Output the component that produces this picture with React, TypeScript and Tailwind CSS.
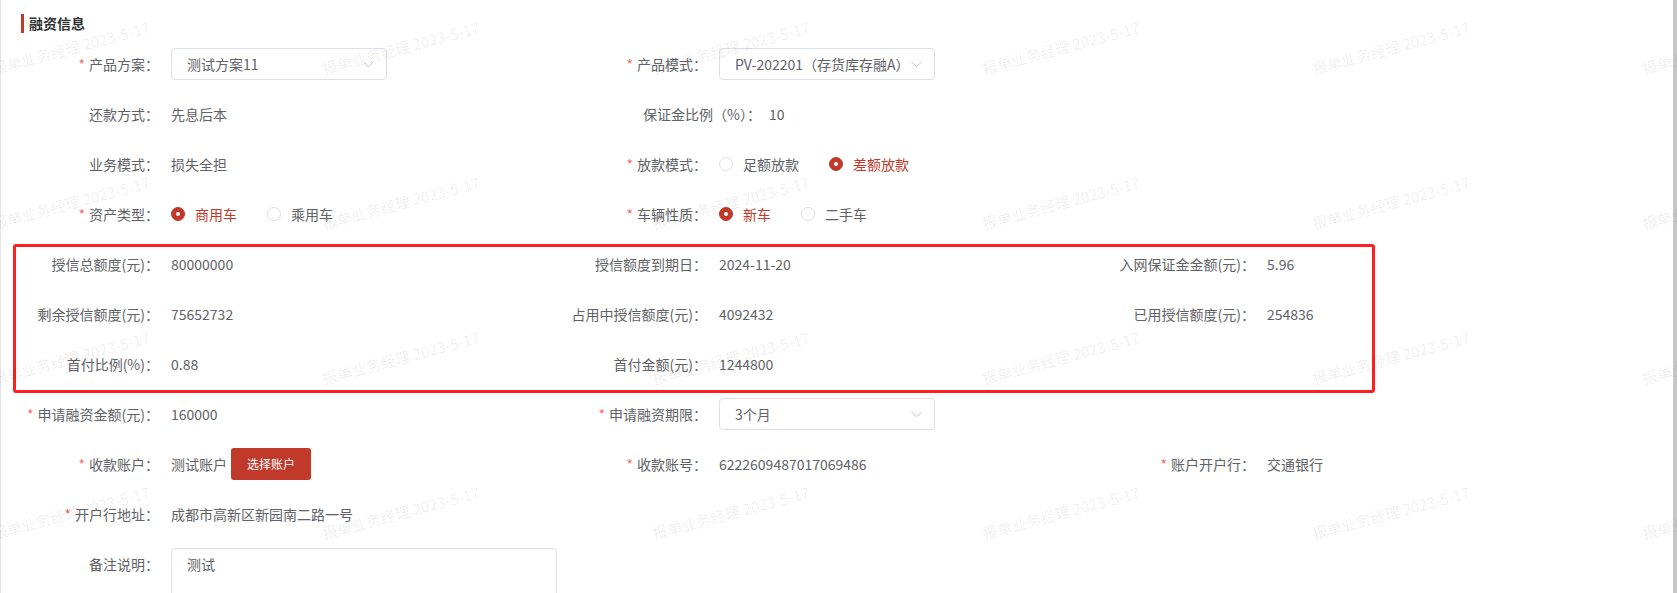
import React from 'react';

type Field = {
  label?: string;
  required?: boolean;
  value?: React.ReactNode;
};

const Select = ({ text }: { text: string }) => (
  <div className="flex h-8 w-[216px] items-center justify-between rounded border border-[#dcdfe6] bg-white pl-[15px] pr-3 text-[#606266]">
    <span className="whitespace-nowrap">{text}</span>
    <svg width="11" height="7" viewBox="0 0 11 7" fill="none" className="shrink-0">
      <path d="M0.5 0.8 L5.5 5.8 L10.5 0.8" stroke="#c0c4cc" strokeWidth="1" />
    </svg>
  </div>
);

const Radio = ({ text, checked }: { text: string; checked?: boolean }) => (
  <label className="mr-[30px] flex items-center">
    {checked ? (
      <span className="flex h-[14px] w-[14px] items-center justify-center rounded-full border border-[#c0392b] bg-[#c0392b]">
        <span className="h-1 w-1 rounded-full bg-white" />
      </span>
    ) : (
      <span className="h-[14px] w-[14px] rounded-full border border-[#dcdfe6] bg-white" />
    )}
    <span className={`pl-[10px] ${checked ? 'text-[#c0392b]' : 'text-[#606266]'}`}>{text}</span>
  </label>
);

const FormItem = ({ field }: { field?: Field }) => {
  if (!field || !field.label) return <div />;
  return (
    <div className="flex h-8 items-center">
      <div className="w-[157px] shrink-0 whitespace-nowrap pr-3 text-right text-[#606266]">
        {field.required && <span className="mr-1 text-[#f56c6c]">*</span>}
        {field.label}
      </div>
      <div className="flex items-center whitespace-nowrap text-[#606266]">{field.value}</div>
    </div>
  );
};

const Row = ({ fields }: { fields: (Field | undefined)[] }) => (
  <div className="grid h-8 grid-cols-[548px_548px_548px]">
    {[0, 1, 2].map((i) => (
      <FormItem key={i} field={fields[i]} />
    ))}
  </div>
);

const Watermarks = () => {
  const cells = Array.from({ length: 24 });
  return (
    <div className="pointer-events-none absolute inset-0 overflow-hidden">
      <div className="ml-[-10px] mt-[38px] grid grid-cols-[repeat(6,330px)] auto-rows-[155px]">
        {cells.map((_, i) => (
          <div key={i}>
            <span className="inline-block -rotate-[15deg] whitespace-nowrap text-[15px] leading-5 text-black/[0.075]">
              报单业务经理 2023-5-17
            </span>
          </div>
        ))}
      </div>
    </div>
  );
};

export default function App() {
  return (
    <div
      className="relative flex h-[593px] w-full overflow-hidden bg-white text-sm"
      style={{ fontFamily: '"Noto Sans CJK SC", "Noto Sans", sans-serif' }}
    >
      <div className="flex-1 border-l border-[#e4e4e4]">
        {/* 标题 */}
        <div className="pl-5 pt-[14px]">
          <div className="h-[19px] border-l-[3px] border-[#c0392b] pl-[5px] text-sm font-bold leading-[19px] text-[#303133]">
            融资信息
          </div>
        </div>

        <div className="mt-[15px] flex flex-col gap-[18px] pl-[13px]">
          <Row
            fields={[
              { label: '产品方案：', required: true, value: <Select text="测试方案11" /> },
              { label: '产品模式：', required: true, value: <Select text="PV-202201（存货库存融A）" /> },
            ]}
          />
          <div className="grid h-8 grid-cols-[548px_548px_548px]">
            <FormItem field={{ label: '还款方式：', value: '先息后本' }} />
            <div className="flex h-8 items-center whitespace-nowrap pl-[81px] text-[#606266]">
              <span className="w-[126px]">保证金比例（%）：</span>
              <span>10</span>
            </div>
            <div />
          </div>
          <Row
            fields={[
              { label: '业务模式：', value: '损失全担' },
              {
                label: '放款模式：',
                required: true,
                value: (
                  <>
                    <Radio text="足额放款" />
                    <Radio text="差额放款" checked />
                  </>
                ),
              },
            ]}
          />
          <Row
            fields={[
              {
                label: '资产类型：',
                required: true,
                value: (
                  <>
                    <Radio text="商用车" checked />
                    <Radio text="乘用车" />
                  </>
                ),
              },
              {
                label: '车辆性质：',
                required: true,
                value: (
                  <>
                    <Radio text="新车" checked />
                    <Radio text="二手车" />
                  </>
                ),
              },
            ]}
          />

          {/* 授信额度 - 红框标注 */}
          <div className="relative flex flex-col gap-[18px]">
            <span className="pointer-events-none absolute -left-px -top-1 h-[149px] w-[1362px] rounded-[3px] border-[3px] border-[#fe2020]" />
            <Row
              fields={[
                { label: '授信总额度(元)：', value: '80000000' },
                { label: '授信额度到期日：', value: '2024-11-20' },
                { label: '入网保证金金额(元)：', value: '5.96' },
              ]}
            />
            <Row
              fields={[
                { label: '剩余授信额度(元)：', value: '75652732' },
                { label: '占用中授信额度(元)：', value: '4092432' },
                { label: '已用授信额度(元)：', value: '254836' },
              ]}
            />
            <Row
              fields={[
                { label: '首付比例(%)：', value: '0.88' },
                { label: '首付金额(元)：', value: '1244800' },
              ]}
            />
          </div>

          <Row
            fields={[
              { label: '申请融资金额(元)：', required: true, value: '160000' },
              { label: '申请融资期限：', required: true, value: <Select text="3个月" /> },
            ]}
          />
          <Row
            fields={[
              {
                label: '收款账户：',
                required: true,
                value: (
                  <>
                    <span>测试账户</span>
                    <button className="ml-1 h-8 w-20 rounded-[3px] bg-[#c0392b] text-xs text-white">选择账户</button>
                  </>
                ),
              },
              { label: '收款账号：', required: true, value: '6222609487017069486' },
              { label: '账户开户行：', required: true, value: '交通银行' },
            ]}
          />
          <Row fields={[{ label: '开户行地址：', required: true, value: '成都市高新区新园南二路一号' }]} />
          <div className="flex">
            <div className="flex h-8 w-[157px] shrink-0 items-center justify-end pr-3 text-[#606266]">备注说明：</div>
            <div className="h-[60px] w-[386px] rounded border border-[#dcdfe6] px-[15px] py-[5px] leading-[21px] text-[#606266]">
              测试
            </div>
          </div>
        </div>
      </div>
      <div className="w-1 shrink-0 bg-[#c6c6c6]" />
      <Watermarks />
    </div>
  );
}
